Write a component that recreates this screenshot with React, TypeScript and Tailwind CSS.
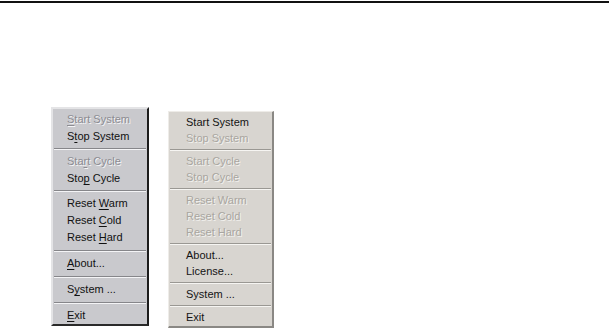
type Item = { label: string; key?: number; disabled?: boolean } | { sep: number };

const classicItems: Item[] = [
  { label: "Start System", key: 0, disabled: true },
  { label: "Stop System", key: 1 },
  { sep: 8 },
  { label: "Start Cycle", key: 3, disabled: true },
  { label: "Stop Cycle", key: 3 },
  { sep: 8 },
  { label: "Reset Warm", key: 6 },
  { label: "Reset Cold", key: 6 },
  { label: "Reset Hard", key: 6 },
  { sep: 9 },
  { label: "About...", key: 0 },
  { sep: 9 },
  { label: "System ...", key: 1 },
  { sep: 9 },
  { label: "Exit", key: 0 },
];

const flatItems: Item[] = [
  { label: "Start System" },
  { label: "Stop System", disabled: true },
  { sep: 7 },
  { label: "Start Cycle", disabled: true },
  { label: "Stop Cycle", disabled: true },
  { sep: 7 },
  { label: "Reset Warm", disabled: true },
  { label: "Reset Cold", disabled: true },
  { label: "Reset Hard", disabled: true },
  { sep: 7 },
  { label: "About..." },
  { label: "License..." },
  { sep: 7 },
  { label: "System ..." },
  { sep: 7 },
  { label: "Exit" },
];

function Label({ label, k }: { label: string; k?: number }) {
  if (k === undefined) return <span className="whitespace-pre">{label}</span>;
  return (
    <span className="whitespace-pre">
      {label.slice(0, k)}
      <span className="underline underline-offset-[2px]">{label[k]}</span>
      {label.slice(k + 1)}
    </span>
  );
}

function ClassicMenu() {
  return (
    <div className="w-[98px] bg-[#c9c9cd] border-t-2 border-l-2 border-t-[#e4e4e6] border-l-[#e4e4e6] border-r-2 border-b-2 border-r-[#1c1c1c] border-b-[#2a2a2a] pt-[2px]">
      {classicItems.map((it, i) =>
        "sep" in it ? (
          <div
            key={i}
            className={(it.sep === 8 ? "h-[8px]" : "h-[9px]") + " flex flex-col justify-center px-[1px]"}
          >
            <div className="h-px bg-[#86868a]" />
            <div className="h-px bg-[#f4f4f6]" />
          </div>
        ) : (
          <div
            key={i}
            className={
              "h-[17px] flex items-center pl-[14px] text-[11px] leading-none " +
              (it.disabled
                ? "text-[#8c8c92] [text-shadow:1px_1px_0_#f4f4f6]"
                : "text-[#111]")
            }
          >
            <Label label={it.label} k={it.key} />
          </div>
        )
      )}
    </div>
  );
}

function FlatMenu() {
  return (
    <div className="w-[106px] bg-[#d8d5d0] border-t border-l border-t-[#eeece8] border-l-[#eeece8] border-r-2 border-b-2 border-r-[#8a8884] border-b-[#8a8884] pt-[2px] pb-[1px]">
      {flatItems.map((it, i) =>
        "sep" in it ? (
          <div key={i} className="h-[7px] flex flex-col justify-center px-[1px]">
            <div className="h-px bg-[#9a9893]" />
            <div className="h-px bg-[#f6f5f2]" />
          </div>
        ) : (
          <div
            key={i}
            className={
              "h-[16px] flex items-center pl-[17px] text-[11px] leading-none " +
              (it.disabled
                ? "text-[#a9a6a0] [text-shadow:1px_1px_0_#f2f1ee]"
                : "text-[#141414]")
            }
          >
            <Label label={it.label} />
          </div>
        )
      )}
    </div>
  );
}

export default function App() {
  return (
    <div className="w-[609px] h-[328px] bg-white overflow-hidden font-['Liberation_Sans',Arial,sans-serif]">
      <div className="mt-px h-[2px] bg-[#111]" />
      <div className="flex items-start gap-[19px] pl-[51px] pt-[104px]">
        <ClassicMenu />
        <div className="mt-[4px]">
          <FlatMenu />
        </div>
      </div>
    </div>
  );
}
